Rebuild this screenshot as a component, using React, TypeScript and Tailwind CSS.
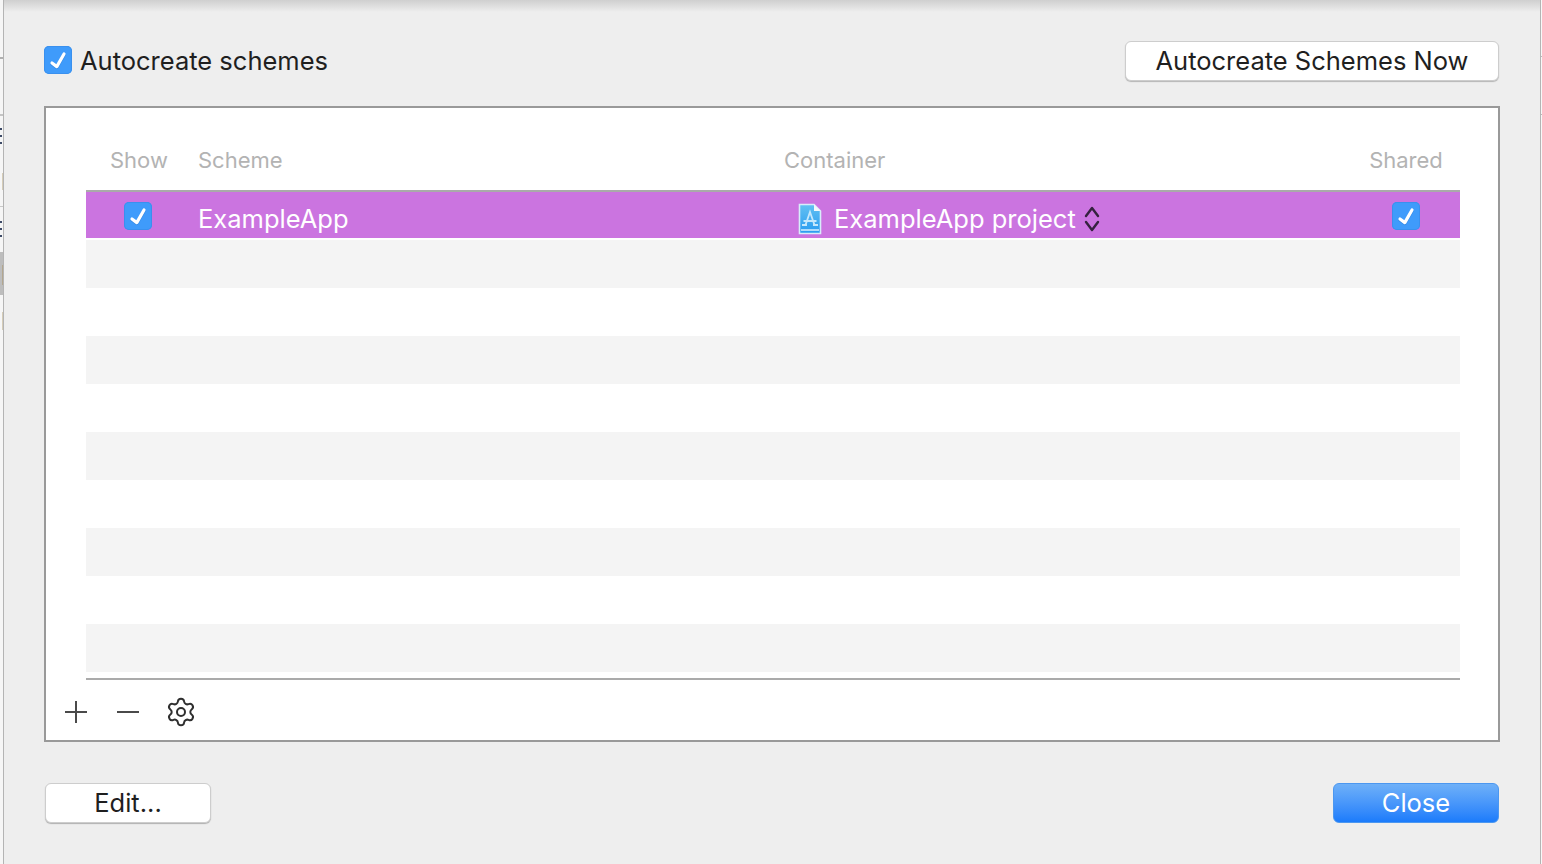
import { Settings } from "lucide-react";

const STRIPES = [0, 1, 2, 3, 4, 5, 6, 7, 8];

function CheckBox() {
  return (
    <div className="h-7 w-7 rounded-[5px] bg-[#3f9bfb] shadow-[inset_0_0_0_1px_#3a90ee]">
      <svg width="28" height="28" viewBox="0 0 28 28" fill="none">
        <path d="M8 17 L12.8 20.6 L20 8" stroke="#2a78d0" strokeOpacity="0.5" strokeWidth="3.4" strokeLinecap="round" strokeLinejoin="round" transform="translate(0 0.8)" />
        <path d="M8 17 L12.8 20.6 L20 8" stroke="white" strokeWidth="3.2" strokeLinecap="round" strokeLinejoin="round" />
      </svg>
    </div>
  );
}

function ProjectIcon() {
  return (
    <svg width="24" height="32" viewBox="0 0 24 32" fill="none">
      <defs>
        <linearGradient id="doc" x1="0" y1="0" x2="0" y2="1">
          <stop offset="0" stopColor="#62c0f2" />
          <stop offset="1" stopColor="#2a9cf0" />
        </linearGradient>
      </defs>
      <path d="M1.5 1.5 H16 L22.5 8 V30.5 H1.5 Z" fill="url(#doc)" stroke="#d8ecfa" strokeWidth="1.6" />
      <path d="M16 1.5 V8 H22.5 Z" fill="#f4f8fc" />
      <path d="M7.5 22 L12 9 L16.5 22 M5.5 18 H18.5 M4 22 H9 M15 22 H20" stroke="#c6e8fc" strokeWidth="1.8" />
      <path d="M3 27 H21" stroke="#e6f5ff" strokeWidth="1.4" />
    </svg>
  );
}

function Stepper() {
  return (
    <svg width="16" height="28" viewBox="0 0 16 28" fill="none">
      <path d="M2 11 L8 3 L14 11 M2 17 L8 25 L14 17" stroke="#35223f" strokeWidth="2.4" strokeLinecap="round" strokeLinejoin="round" />
    </svg>
  );
}

function Dots() {
  return (
    <div className="flex flex-col gap-[5px]">
      <div className="h-[2px] w-[2px] bg-[#3d4a66]" />
      <div className="h-[2px] w-[2px] bg-[#3d4a66]" />
      <div className="h-[2px] w-[2px] bg-[#3d4a66]" />
    </div>
  );
}

export default function App() {
  return (
    <div className="flex h-[864px] w-[1542px] overflow-hidden bg-white font-['Inter',sans-serif] text-[#1f1f1f]">
      {/* edge of the window behind */}
      <div className="flex w-[3px] flex-col bg-[#f6f6f6]">
        <div className="mt-[57px] h-[2px] bg-[#b0b0b0]" />
        <div className="mt-[55px] h-[2px] bg-[#c4c4c4]" />
        <div className="mt-3">
          <Dots />
        </div>
        <div className="mt-[29px] h-[17px] w-px self-end bg-[#d6cdb8]" />
        <div className="mt-4 h-px bg-[#c8c8c8]" />
        <div className="mt-[14px]">
          <Dots />
        </div>
        <div className="mt-[15px] flex h-[43px] justify-end bg-[#bdbdbd] pt-[13px]">
          <div className="h-5 w-px bg-[#b3a78f]" />
        </div>
        <div className="mt-[17px] h-[18px] w-px self-end bg-[#d6cdb8]" />
      </div>

      <div className="flex w-[1538px] flex-col border-x border-[#b4b4b4] bg-[#eeeeee]">
        <div className="h-3 bg-gradient-to-b from-[#cfcfcf] to-[#eeeeee]" />

        <div className="mx-10 mt-[29px] flex h-10 items-center justify-between pr-[1px]">
          <div className="flex items-center gap-2">
            <div className="mb-[2px]">
              <CheckBox />
            </div>
            <span className="text-[25.5px] leading-none">Autocreate schemes</span>
          </div>
          <button className="h-10 w-[374px] rounded-[6px] border border-[#cdcdcd] bg-white text-[25.5px] shadow-[0_1px_1px_#b5b5b5]">
            Autocreate Schemes Now
          </button>
        </div>

        <div className="mx-10 mt-[25px] h-[636px] border-2 border-[#999999] bg-white pt-[28px]">
          <div className="ml-10 mr-[38px] grid h-[56px] grid-cols-[112px_586px_568px_108px] items-center border-b-2 border-[#aaaaaa] pb-[6px] text-[22px] text-[#b3b3b3]">
            <span className="pl-6">Show</span>
            <span>Scheme</span>
            <span>Container</span>
            <span className="text-center">Shared</span>
          </div>

          <div className="ml-10 mr-[38px] grid h-[46px] grid-cols-[112px_586px_568px_108px] items-center bg-[#cb74e0] text-[25.5px] text-white">
            <div className="flex w-[104px] justify-center pt-[2px]">
              <CheckBox />
            </div>
            <span className="pt-2 leading-none">ExampleApp</span>
            <div className="flex items-center pl-[14px] pt-2">
              <ProjectIcon />
              <span className="ml-[12px] leading-none">ExampleApp project</span>
              <span className="ml-[8px]">
                <Stepper />
              </span>
            </div>
            <div className="flex justify-center pt-[2px]">
              <CheckBox />
            </div>
          </div>

          <div className="ml-10 mr-[38px] mt-[2px]">
            {STRIPES.map((i) => (
              <div key={i} className={i % 2 === 0 ? "h-12 bg-[#f4f4f4]" : "h-12 bg-white"} />
            ))}
          </div>

          <div className="ml-10 mr-[38px] mt-[6px] h-[2px] bg-[#aaaaaa]" />

          <div className="ml-[18px] mt-4 flex items-center text-[#4a4a4a]">
            <svg width="24" height="24" viewBox="0 0 24 24" fill="none">
              <path d="M12 1 V23 M1 12 H23" stroke="currentColor" strokeWidth="2" />
            </svg>
            <svg className="ml-7" width="24" height="24" viewBox="0 0 24 24" fill="none">
              <path d="M1 12 H23" stroke="currentColor" strokeWidth="2" />
            </svg>
            <Settings className="ml-[25px]" size={32} strokeWidth={1.5} color="#2f2f2f" />
          </div>
        </div>

        <div className="mx-10 mt-[41px] flex justify-between px-[1px]">
          <button className="h-10 w-[166px] rounded-[6px] border border-[#cdcdcd] bg-white text-[25.5px] shadow-[0_1px_1px_#b0b0b0]">
            Edit...
          </button>
          <button className="h-10 w-[166px] rounded-[6px] border border-[#4b97f0] bg-gradient-to-b from-[#6eb0f8] to-[#1a7bfb] text-[25.5px] text-white">
            Close
          </button>
        </div>
      </div>

      <div className="flex w-px flex-col bg-[#f8f8f8]">
        <div className="mt-14 h-px bg-[#bbbbbb]" />
        <div className="mt-[57px] h-px bg-[#bbbbbb]" />
      </div>
    </div>
  );
}
